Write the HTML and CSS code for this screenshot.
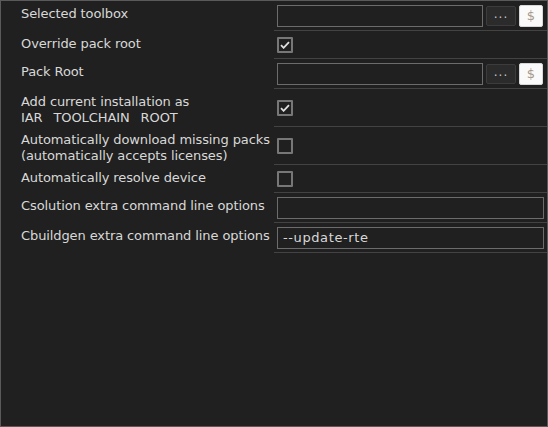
FILE: index.html
```html
<!DOCTYPE html>
<html lang="en">
<head>
    <meta charset="UTF-8">
    <title>CMSIS Settings</title>
    <link rel="stylesheet" href="styles.css">
</head>
<body>
    <div class="panel">
        <div class="row">
            <div class="label">Selected toolbox</div>
            <div class="value input-row">
                <input type="text" class="text-input">
                <button class="browse">...</button>
                <button class="macro">$</button>
            </div>
        </div>

        <div class="row">
            <div class="label">Override pack root</div>
            <div class="value check-row">
                <span class="checkbox checked">
                    <svg width="10" height="8" viewBox="0 0 10 8"><path d="M1 4.2 L3.6 6.8 L9 1.2" fill="none" stroke="#e0e0e0" stroke-width="1.8"/></svg>
                </span>
            </div>
        </div>

        <div class="row">
            <div class="label">Pack Root</div>
            <div class="value input-row">
                <input type="text" class="text-input">
                <button class="browse">...</button>
                <button class="macro">$</button>
            </div>
        </div>

        <div class="row">
            <div class="label">Add current installation as<br><span class="spaced">IAR TOOLCHAIN ROOT</span></div>
            <div class="value check-row">
                <span class="checkbox checked">
                    <svg width="10" height="8" viewBox="0 0 10 8"><path d="M1 4.2 L3.6 6.8 L9 1.2" fill="none" stroke="#e0e0e0" stroke-width="1.8"/></svg>
                </span>
            </div>
        </div>

        <div class="row">
            <div class="label">Automatically download missing packs<br>(automatically accepts licenses)</div>
            <div class="value check-row">
                <span class="checkbox"></span>
            </div>
        </div>

        <div class="row">
            <div class="label">Automatically resolve device</div>
            <div class="value check-row">
                <span class="checkbox"></span>
            </div>
        </div>

        <div class="row">
            <div class="label">Csolution extra command line options</div>
            <div class="value input-row">
                <input type="text" class="text-input">
            </div>
        </div>

        <div class="row">
            <div class="label">Cbuildgen extra command line options</div>
            <div class="value input-row">
                <input type="text" class="text-input" value="--update-rte">
            </div>
        </div>
    </div>
</body>
</html>
```

FILE: styles.css
```css
body {
    margin: 0;
    padding: 0;
    background-color: #202020;
    font-family: "DejaVu Sans", Verdana, sans-serif;
    font-size: 13px;
    color: #d8d8d8;
}
.panel {
    height: 427px;
    box-sizing: border-box;
    border: 1px solid #5a5a5a;
    background-color: #202020;
}
.row {
    display: grid;
    grid-template-columns: 273px 1fr;
}
.label {
    padding: 5px 0 1px 20px;
    line-height: 16px;
    white-space: nowrap;
    letter-spacing: -0.1px;
}
.spaced {
    word-spacing: 7px;
}
.value {
    display: flex;
    align-items: center;
    gap: 3px;
    padding: 0 3px;
    border-bottom: 1px solid #434343;
}
.input-row {
    min-height: 29px;
}
.check-row {
    min-height: 27px;
}
.text-input {
    flex: 1;
    min-width: 0;
    height: 22px;
    box-sizing: border-box;
    margin: 0;
    padding: 0 5px;
    border: 1px solid #6c6c6c;
    background-color: #202020;
    color: #d8d8d8;
    font-family: "DejaVu Sans", Verdana, sans-serif;
    font-size: 13px;
    letter-spacing: 0.6px;
    outline: none;
}
.browse {
    width: 30px;
    height: 20px;
    margin: 0;
    padding: 0 0 3px;
    border: 1px solid #3c3c3c;
    border-radius: 2px;
    background-color: #2b2b2b;
    color: #c8c8c8;
    font-family: "DejaVu Sans", Verdana, sans-serif;
    font-size: 12px;
    letter-spacing: 1px;
}
.macro {
    width: 24px;
    height: 22px;
    margin: 0 1px 0 0;
    padding: 0;
    border: 1px solid #d8d8d8;
    border-radius: 2px;
    background-color: #fafafa;
    color: #a89888;
    font-family: "DejaVu Sans", Verdana, sans-serif;
    font-size: 13px;
}
.checkbox {
    display: flex;
    align-items: center;
    justify-content: center;
    width: 16px;
    height: 16px;
    box-sizing: border-box;
    border: 2px solid #777777;
    border-radius: 1px;
}
```
